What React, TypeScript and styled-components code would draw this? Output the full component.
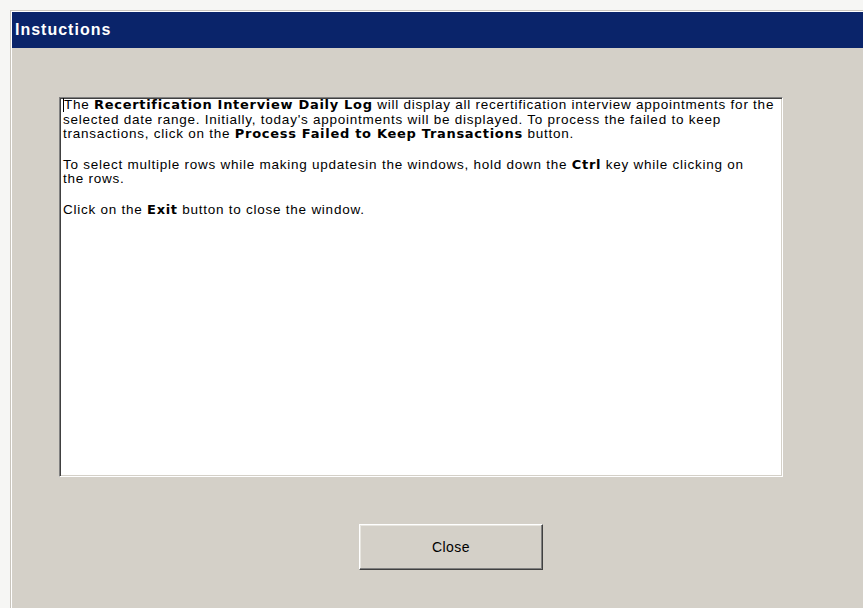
import styled, { createGlobalStyle } from "styled-components";

const GlobalStyle = createGlobalStyle`
  html, body {
    margin: 0;
    padding: 0;
    background: #f6f6f4;
    width: 863px;
    height: 608px;
    overflow: hidden;
  }
`;

const Window = styled.div`
  margin: 10px 0 0 10px;
  height: 598px;
  display: flex;
  flex-direction: column;
  background-color: #d4d0c8;
  border-top: 1px solid #c9c5bd;
  border-left: 1px solid #c9c5bd;
  box-shadow: inset 1px 1px 0 #ffffff;
  padding: 1px 0 0 1px;
  box-sizing: border-box;
  font-family: "Liberation Sans", Arial, sans-serif;
`;

const TitleBar = styled.div`
  height: 36px;
  background-color: #0a246a;
  color: #ffffff;
  display: flex;
  align-items: center;
  padding-left: 3px;
  font-family: "Liberation Sans", Arial, sans-serif;
  font-weight: bold;
  font-size: 16px;
  letter-spacing: 1px;
`;

const Body = styled.div`
  flex: 1;
  display: flex;
  flex-direction: column;
  padding: 49px 0 0 47px;
`;

const TextPanel = styled.div`
  width: 724px;
  height: 380px;
  box-sizing: border-box;
  background-color: #ffffff;
  border-top: 1px solid #808080;
  border-left: 1px solid #808080;
  border-right: 1px solid #ffffff;
  border-bottom: 1px solid #ffffff;
  box-shadow: inset 1px 1px 0 #404040, inset -1px -1px 0 #d4d0c8;
  padding: 0 4px 0 3px;
  font-size: 13.5px;
  line-height: 14.5px;
  letter-spacing: 0.75px;
  color: #000000;
  overflow: hidden;
`;

const Paragraph = styled.p`
  margin: 0 0 16px 0;
  white-space: nowrap;
`;

const Strong = styled.b`
  font-family: "DejaVu Sans", Tahoma, sans-serif;
  font-size: 13px;
  font-weight: bold;
  letter-spacing: 0.7px;
`;

const Caret = styled.span`
  display: inline-block;
  width: 0;
  height: 14px;
  border-left: 1px solid #000000;
  vertical-align: -3px;
`;

const ButtonRow = styled.div`
  padding: 47px 0 0 300px;
`;

const Button = styled.button`
  width: 184px;
  height: 46px;
  background-color: #d4d0c8;
  border-top: 1px solid #ffffff;
  border-left: 1px solid #ffffff;
  border-right: 1px solid #404040;
  border-bottom: 1px solid #404040;
  box-shadow: inset -1px -1px 0 #808080, inset 1px 1px 0 #e8e6e0;
  font-family: "Liberation Sans", Arial, sans-serif;
  font-size: 14px;
  letter-spacing: 0.4px;
  color: #000000;
  padding: 0;
`;

export default function App() {
  return (
    <>
      <GlobalStyle />
      <Window>
        <TitleBar>Instuctions</TitleBar>
        <Body>
          <TextPanel>
            <Paragraph>
              <Caret />The <Strong>Recertification Interview Daily Log</Strong> will display all
              recertification interview appointments for the
              <br />
              selected date range. Initially, today's appointments will be displayed. To process
              the failed to keep
              <br />
              transactions, click on the <Strong>Process Failed to Keep Transactions</Strong>{" "}
              button.
            </Paragraph>
            <Paragraph>
              To select multiple rows while making updatesin the windows, hold down the{" "}
              <Strong>Ctrl</Strong> key while clicking on
              <br />
              the rows.
            </Paragraph>
            <Paragraph>
              Click on the <Strong>Exit</Strong> button to close the window.
            </Paragraph>
          </TextPanel>
          <ButtonRow>
            <Button>Close</Button>
          </ButtonRow>
        </Body>
      </Window>
    </>
  );
}
